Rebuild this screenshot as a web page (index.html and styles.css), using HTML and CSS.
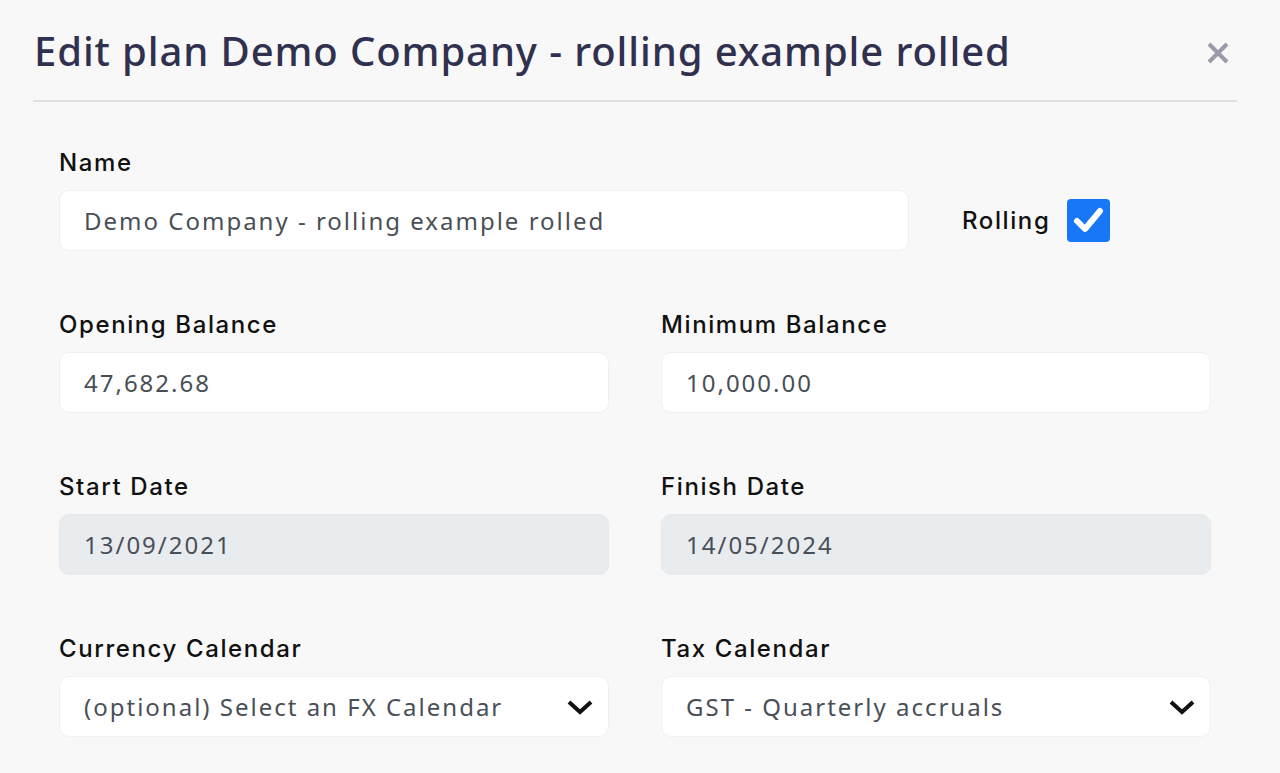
FILE: index.html
```html
<!DOCTYPE html>
<html lang="en">
<head>
    <meta charset="UTF-8">
    <meta name="viewport" content="width=device-width, initial-scale=1.0">
    <title>Edit plan</title>
    <link rel="stylesheet" href="styles.css">
</head>
<body>
    <div class="modal">
        <div class="modal-header">
            <h1>Edit plan Demo Company - rolling example rolled</h1>
            <button type="button" class="close" aria-label="Close">
                <svg width="24" height="24" viewBox="0 0 24 24">
                    <path d="M3 3 L21 21 M21 3 L3 21" stroke="#9b9aa8" stroke-width="4" stroke-linecap="butt"/>
                </svg>
            </button>
        </div>
        <form class="modal-body">
            <div class="field">
                <label for="name">Name</label>
                <div class="name-row">
                    <input type="text" id="name" class="input name-input" value="Demo Company - rolling example rolled">
                    <label class="rolling" for="rolling">Rolling</label>
                    <span class="checkbox" id="rolling">
                        <svg width="43" height="43" viewBox="0 0 43 43">
                            <path d="M10 22 L18 30 L33 12" fill="none" stroke="#ffffff" stroke-width="6" stroke-linecap="round" stroke-linejoin="round"/>
                        </svg>
                    </span>
                </div>
            </div>

            <div class="grid">
                <div class="field">
                    <label for="opening">Opening Balance</label>
                    <input type="text" id="opening" class="input" value="47,682.68">
                </div>
                <div class="field">
                    <label for="minimum">Minimum Balance</label>
                    <input type="text" id="minimum" class="input" value="10,000.00">
                </div>
                <div class="field">
                    <label for="start">Start Date</label>
                    <input type="text" id="start" class="input disabled" value="13/09/2021" disabled>
                </div>
                <div class="field">
                    <label for="finish">Finish Date</label>
                    <input type="text" id="finish" class="input disabled" value="14/05/2024" disabled>
                </div>
                <div class="field">
                    <label for="fx">Currency Calendar</label>
                    <div class="select" id="fx">
                        <span>(optional) Select an FX Calendar</span>
                        <svg class="chevron" width="28" height="18" viewBox="0 0 28 18">
                            <path d="M3 4 L14 14 L25 4" fill="none" stroke="#111" stroke-width="4"/>
                        </svg>
                    </div>
                </div>
                <div class="field">
                    <label for="tax">Tax Calendar</label>
                    <div class="select" id="tax">
                        <span>GST - Quarterly accruals</span>
                        <svg class="chevron" width="28" height="18" viewBox="0 0 28 18">
                            <path d="M3 4 L14 14 L25 4" fill="none" stroke="#111" stroke-width="4"/>
                        </svg>
                    </div>
                </div>
            </div>
        </form>
    </div>
</body>
</html>
```

FILE: styles.css
```css
body {
    margin: 0;
    background-color: #f8f8f8;
    font-family: Inter, "Noto Sans", sans-serif;
    color: #111111;
}

.modal {
    padding: 0 43px 0 33px;
}

.modal-header {
    display: flex;
    justify-content: space-between;
    align-items: center;
    border-bottom: 2px solid #e0e0e0;
    padding: 26px 0 24px 1px;
}

.modal-header h1 {
    margin: 0;
    font-family: "Noto Sans", sans-serif;
    font-weight: 500;
    font-size: 40px;
    line-height: 50px;
    letter-spacing: 0.9px;
    color: #30304f;
}

.close {
    background: none;
    border: none;
    padding: 0;
    margin-right: 7px;
    margin-top: 6px;
    cursor: pointer;
}

.modal-body {
    padding: 46px 26px 0 26px;
}

.field label {
    display: block;
    font-size: 24px;
    line-height: 29px;
    font-weight: 500;
    letter-spacing: 1.6px;
    margin-bottom: 13px;
}

.name-row {
    display: flex;
    align-items: center;
}

.input,
.select {
    box-sizing: border-box;
    height: 61px;
    width: 100%;
    padding: 0 24px;
    border: 1px solid #f0f0f0;
    border-radius: 10px;
    background-color: #ffffff;
    font-family: "Noto Sans", sans-serif;
    font-size: 24px;
    letter-spacing: 2px;
    color: #4a4f57;
    outline: none;
}

.name-input {
    width: 850px;
    flex: none;
}

.disabled {
    background-color: #e9ecef;
    border-color: #e6e9ec;
}

.field .rolling {
    margin: 0 17px 0 53px;
    line-height: 29px;
}

.checkbox {
    display: block;
    width: 43px;
    height: 43px;
    border-radius: 4px;
    background-color: #1877f6;
}

.checkbox svg {
    display: block;
}

.grid {
    display: grid;
    grid-template-columns: 550px 550px;
    column-gap: 52px;
    row-gap: 59px;
    margin-top: 59px;
}

.select {
    display: flex;
    justify-content: space-between;
    align-items: center;
    padding-right: 14px;
}
```
